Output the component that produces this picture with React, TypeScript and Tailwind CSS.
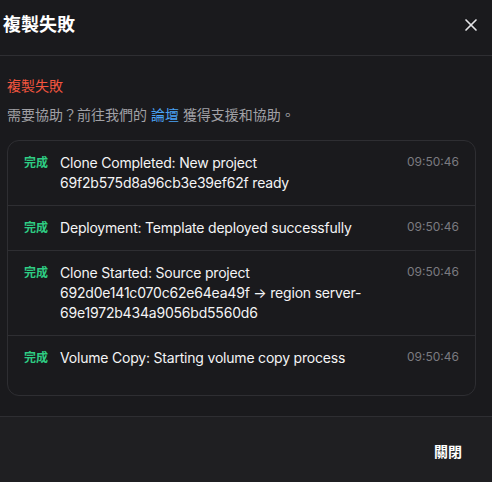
import { X } from "lucide-react";

type LogItem = {
  id: string;
  status: string;
  message: string;
  time: string;
};

const logs: LogItem[] = [
  {
    id: "clone-completed",
    status: "完成",
    message: "Clone Completed: New project 69f2b575d8a96cb3e39ef62f ready",
    time: "09:50:46",
  },
  {
    id: "deployment",
    status: "完成",
    message: "Deployment: Template deployed successfully",
    time: "09:50:46",
  },
  {
    id: "clone-started",
    status: "完成",
    message:
      "Clone Started: Source project 692d0e141c070c62e64ea49f → region server-69e1972b434a9056bd5560d6",
    time: "09:50:46",
  },
  {
    id: "volume-copy",
    status: "完成",
    message: "Volume Copy: Starting volume copy process",
    time: "09:50:46",
  },
];

/**
 * 複製失敗ダイアログ（右側がはみ出した状態のスクリーンショット再現）。
 */
export default function App() {
  return (
    <div
      className="flex h-[482px] w-[492px] flex-col overflow-hidden bg-[#1a1a1d] text-white"
      style={{ fontFamily: 'Inter, "Noto Sans CJK TC", sans-serif' }}
    >
      <header className="flex h-[56px] shrink-0 items-center justify-between border-b border-[#2e2e32] pb-[5px] pl-[3px] pr-[11px]">
        <h2 className="text-[18px] font-bold leading-7">複製失敗</h2>
        <button type="button" className="text-[#e4e4e7]" aria-label="關閉">
          <X size={20} strokeWidth={2} />
        </button>
      </header>

      <div className="flex-1 pl-[7px] pr-4 pt-[20px]">
        <p className="text-sm leading-5 text-[#f2553f]">複製失敗</p>
        <p className="mt-[9px] text-sm leading-5 text-[#a1a1a6]">
          需要協助？前往我們的 <span className="text-[#4aa3f5]">論壇</span>{" "}
          獲得支援和協助。
        </p>

        <ul className="mt-[15px] flex flex-col rounded-xl border border-[#2e2e32] pb-[15px]">
          {logs.map((log, index) => (
            <li
              key={log.id}
              className={
                index === 0
                  ? "flex items-start gap-3 px-4 py-3"
                  : "flex items-start gap-3 border-t border-[#2e2e32] px-4 py-3"
              }
            >
              <span className="shrink-0 text-xs font-semibold leading-5 text-[#2ecc83]">
                {log.status}
              </span>
              <p className="min-w-0 flex-1 break-words text-sm leading-5 tracking-[-0.2px] text-[#f4f4f5]">
                {log.message}
              </p>
              <span className="shrink-0 pl-3 pt-[1px] text-xs leading-4 text-[#7b7b80]">
                {log.time}
              </span>
            </li>
          ))}
        </ul>
      </div>

      <footer className="flex h-[66px] shrink-0 items-start justify-end border-t border-[#2e2e32] bg-[#1f1f22] pr-4 pt-[17px]">
        <button
          type="button"
          className="h-9 px-[14px] text-sm font-semibold text-white"
        >
          關閉
        </button>
      </footer>
    </div>
  );
}
